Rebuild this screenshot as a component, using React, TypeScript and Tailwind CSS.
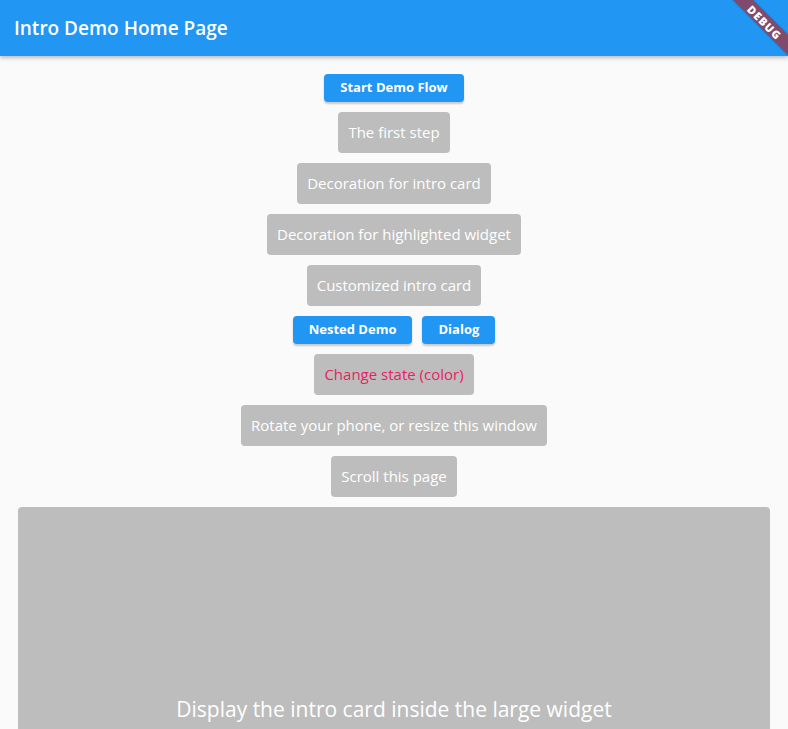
import React from "react";

const font = { fontFamily: '"Open Sans", "Noto Sans", sans-serif' };

function GrayBox({ children, pink }: { children: React.ReactNode; pink?: boolean }) {
  return (
    <div
      className={`bg-[#bdbdbd] rounded-[4px] px-[10px] h-[41px] flex items-center text-[15px] leading-[21px] ${
        pink ? "text-[#e91e63]" : "text-white"
      }`}
    >
      {children}
    </div>
  );
}

function BlueButton({ children }: { children: React.ReactNode }) {
  return (
    <button className="bg-[#2196f3] text-white rounded-[4px] h-[28px] px-[16px] text-[13px] font-bold flex items-center shadow-[0_2px_2px_rgba(0,0,0,0.2)]">
      {children}
    </button>
  );
}

export default function App() {
  return (
    <div className="relative w-[788px] h-[729px] overflow-hidden bg-[#fafafa]" style={font}>
      <header className="relative z-10 h-[56px] bg-[#2196f3] flex items-center pl-[14px] shadow-[0_2px_4px_rgba(0,0,0,0.25)]">
        <h1 className="text-white text-[19px] font-semibold">Intro Demo Home Page</h1>
      </header>
      <main className="flex flex-col items-center gap-[10px] pt-[18px]">
        <BlueButton>Start Demo Flow</BlueButton>
        <GrayBox>The first step</GrayBox>
        <GrayBox>Decoration for intro card</GrayBox>
        <GrayBox>Decoration for highlighted widget</GrayBox>
        <GrayBox>Customized intro card</GrayBox>
        <div className="flex gap-[10px]">
          <BlueButton>Nested Demo</BlueButton>
          <BlueButton>Dialog</BlueButton>
        </div>
        <GrayBox pink>Change state (color)</GrayBox>
        <GrayBox>Rotate your phone, or resize this window</GrayBox>
        <GrayBox>Scroll this page</GrayBox>
        <div className="self-stretch mx-[18px] h-[406px] bg-[#bdbdbd] rounded-[4px] flex items-center justify-center text-white text-[21px]">
          Display the intro card inside the large widget
        </div>
      </main>
      <div className="absolute z-20 top-[22px] right-[23px] w-0 h-0">
        <div className="absolute left-[-60px] top-[-7px] w-[120px] h-[14px] bg-[#7f4a6c] rotate-45 flex items-center justify-center text-white text-[11px] font-extrabold leading-none tracking-[1px] shadow-[0_0_2px_rgba(0,0,0,0.3)]">
          DEBUG
        </div>
      </div>
    </div>
  );
}
